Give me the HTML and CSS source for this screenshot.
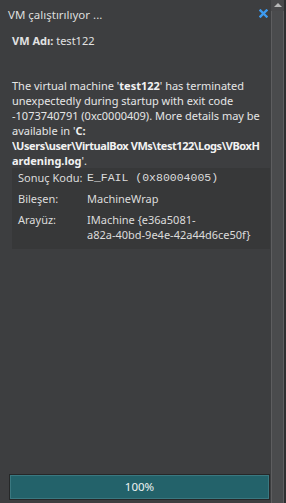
FILE: index.html
```html
<!DOCTYPE html>
<html lang="tr">
<head>
    <meta charset="UTF-8">
    <meta name="viewport" content="width=device-width, initial-scale=1.0">
    <title>VM çalıştırılıyor ...</title>
    <link rel="stylesheet" href="styles.css">
</head>
<body>
    <div class="panel">
        <div class="content">
            <div class="title-row">
                <div class="title">VM çalıştırılıyor ...</div>
                <svg class="close" width="9" height="9" viewBox="0 0 9 9">
                    <path d="M1.5 1.5 L7.5 7.5 M7.5 1.5 L1.5 7.5" stroke="#3d9bf0" stroke-width="2.4" stroke-linecap="square"/>
                </svg>
            </div>
            <div class="vm-name"><b>VM Adı:</b> test122</div>
            <div class="message">
                <div class="line">The virtual machine '<b>test122</b>' has terminated</div>
                <div class="line">unexpectedly during startup with exit code</div>
                <div class="line">-1073740791 (0xc0000409). More details may be</div>
                <div class="line">available in '<b>C:</b></div>
                <div class="line tight"><b>\Users\user\VirtualBox VMs\test122\Logs\VBoxH</b></div>
                <div class="line"><b>ardening.log</b>'.</div>
            </div>
            <div class="details">
                <div class="label">Sonuç Kodu:</div>
                <div class="value mono">E_FAIL (0x80004005)</div>
                <div class="label">Bileşen:</div>
                <div class="value">MachineWrap</div>
                <div class="label">Arayüz:</div>
                <div class="value">IMachine {e36a5081-<br>a82a-40bd-9e4e-42a44d6ce50f}</div>
            </div>
            <div class="spacer"></div>
            <div class="progress">
                <div class="progress-fill">100%</div>
            </div>
        </div>
        <div class="scrollbar">
            <div class="scroll-up"></div>
            <div class="scroll-thumb"></div>
        </div>
    </div>
</body>
</html>
```
FILE: styles.css
```css
body {
    margin: 0;
    height: 503px;
    background: #3d3e40;
    color: #e2e2e2;
    font-family: 'Noto Sans', 'Open Sans', sans-serif;
    font-size: 11px;
    overflow: hidden;
}
.panel {
    display: flex;
    height: 100%;
}
.content {
    flex: 1;
    display: flex;
    flex-direction: column;
    padding: 0 1px 3px 9px;
    min-width: 0;
}
.title-row {
    display: flex;
    align-items: center;
    justify-content: space-between;
    height: 30px;
    padding-right: 2px;
}
.title {
    font-size: 11.5px;
    color: #dedede;
    margin-left: -1px;
    margin-top: -2px;
}
.close {
    margin-top: -4px;
}
.vm-name {
    padding-left: 3px;
    margin-top: 3px;
    line-height: 16px;
}
.vm-name b {
    font-weight: 700;
}
.message {
    margin: 29px 0 0 3px;
    line-height: 15px;
    color: #e6e6e6;
}
.line {
    white-space: nowrap;
}
.line.tight {
    letter-spacing: -0.45px;
    overflow: hidden;
}
.message b {
    font-weight: 700;
    color: #f2f2f2;
}
.details {
    margin: 0 0 0 3px;
    background: #373839;
    display: grid;
    grid-template-columns: 69px 1fr;
    row-gap: 6px;
    padding: 2px 6px 7px 6px;
    line-height: 15px;
}
.label {
    color: #dcdcdc;
    white-space: nowrap;
}
.value {
    color: #dcdcdc;
}
.mono {
    font-family: 'Liberation Mono', monospace;
    font-size: 11.5px;
}
.spacer {
    flex: 1;
}
.progress {
    height: 24px;
    border: 1px solid #262728;
    background: #262728;
}
.progress-fill {
    height: 100%;
    box-sizing: border-box;
    background: #23626a;
    border: 1px solid #3a7880;
    text-align: center;
    line-height: 22px;
    font-size: 11.5px;
    color: #eef3f3;
}
.scrollbar {
    width: 15px;
    display: flex;
    flex-direction: column;
    background: #2e2f31;
}
.scroll-up {
    height: 11px;
    width: 13px;
    background: #49494b;
    position: relative;
}
.scroll-up::after {
    content: '';
    position: absolute;
    left: 3px;
    top: 3px;
    border-left: 4px solid transparent;
    border-right: 4px solid transparent;
    border-bottom: 4px solid #b8b8b8;
}
.scroll-thumb {
    flex: 1;
    width: 11px;
    background: #4a4b4d;
    border-left: 1px solid #5e5e60;
    border-right: 1px solid #5e5e60;
}
```
